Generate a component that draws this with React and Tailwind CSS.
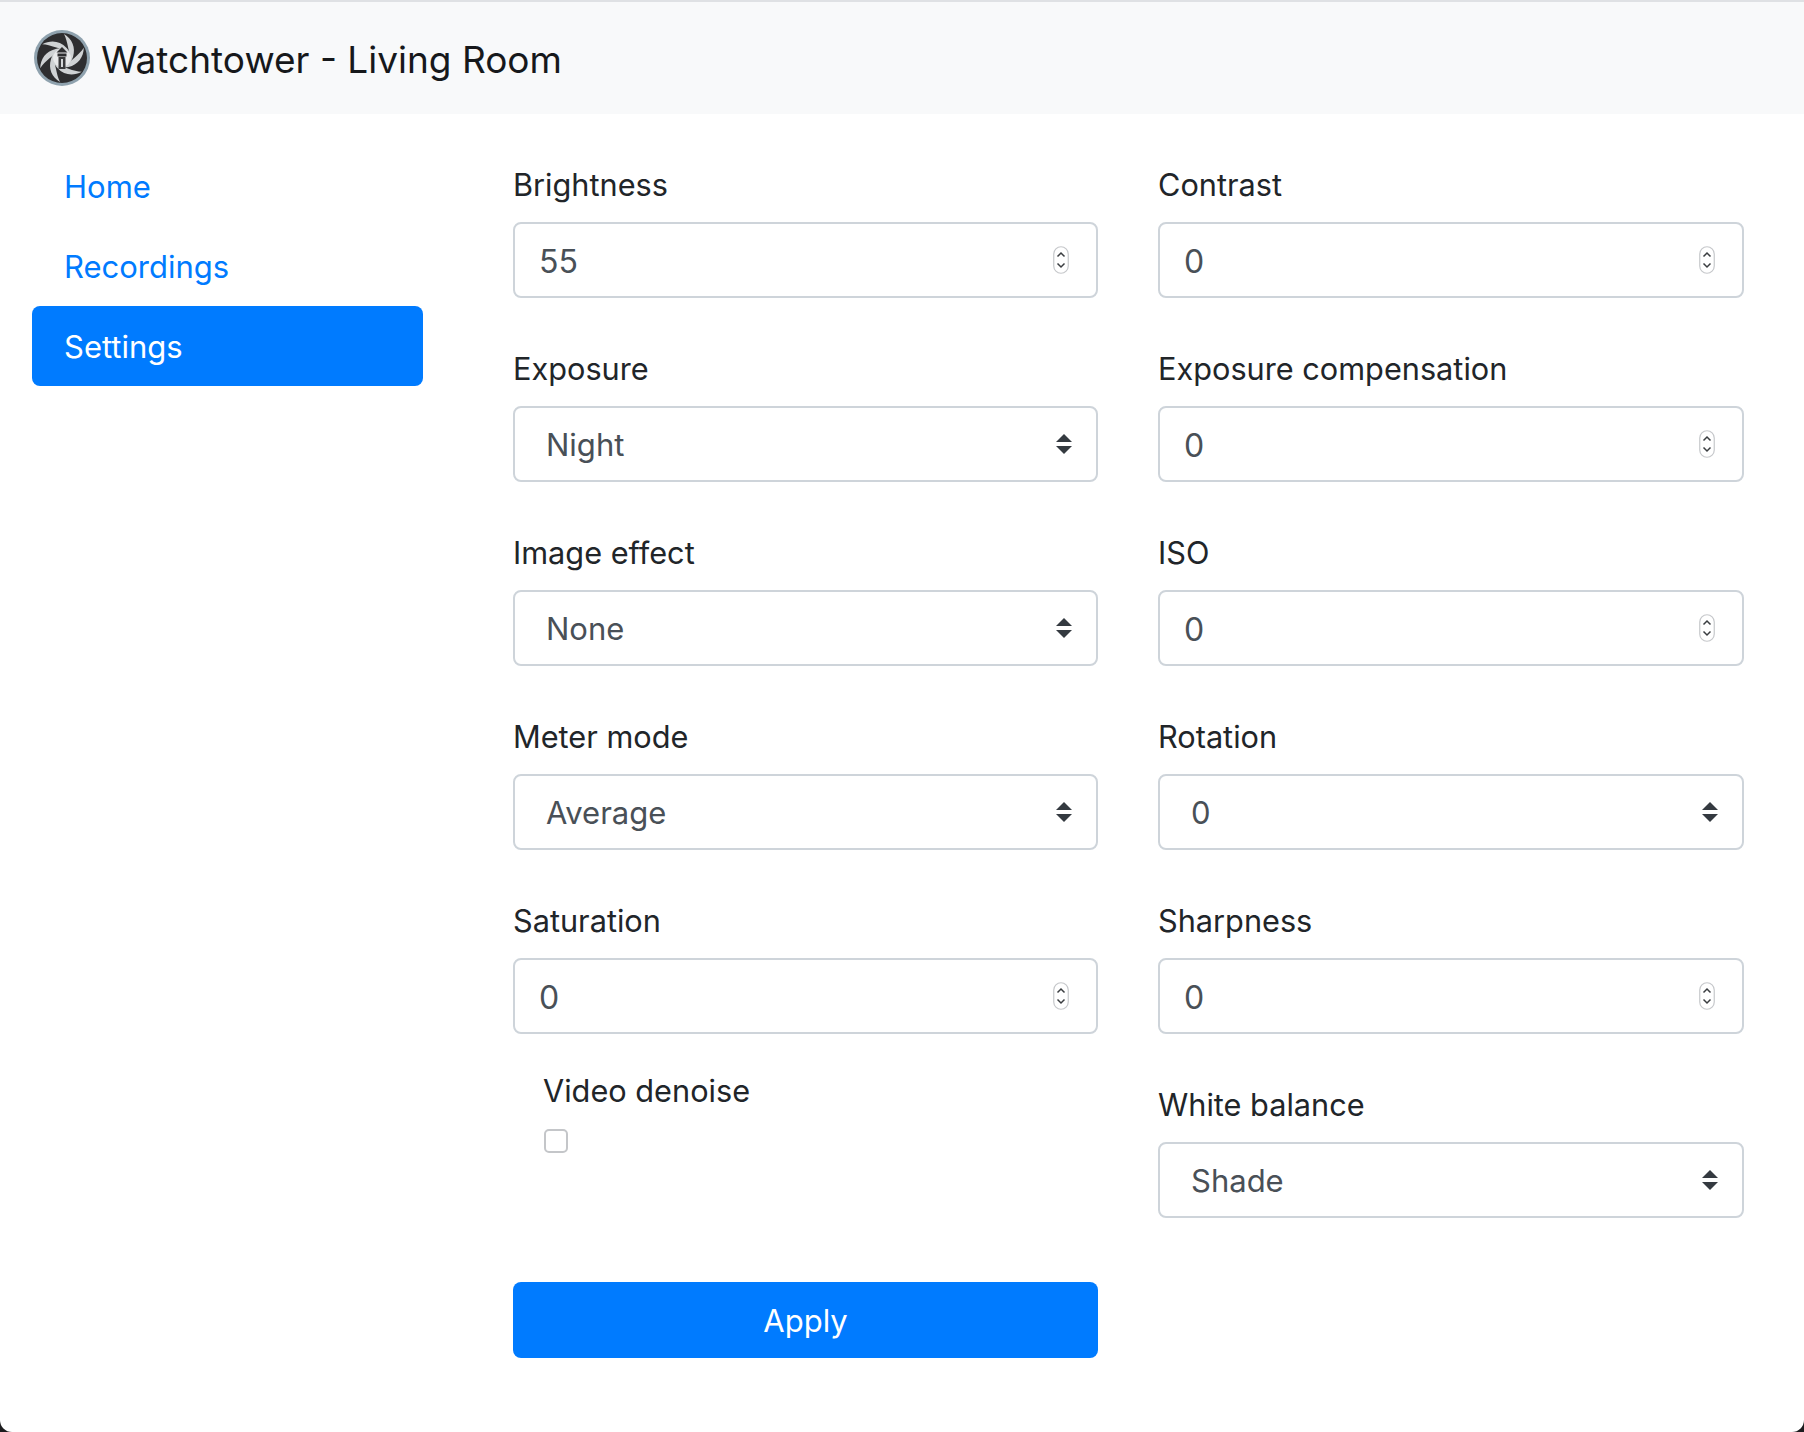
const font = { fontFamily: "Inter, 'Liberation Sans', sans-serif" };

function Logo() {
  const blades = [0, 60, 120, 180, 240, 300];
  return (
    <svg width="58" height="58" viewBox="0 0 58 58" className="shrink-0">
      <circle cx="29" cy="29" r="28" fill="#8fa2ae" />
      <circle cx="29" cy="29" r="25" fill="#2e2e30" />
      {blades.map((a) => (
        <path
          key={a}
          d="M31 5 C39 10 43 18 40 28 C38 34 34 37 30 38 C35 32 37 25 35 18 C34 13 33 9 31 5 Z"
          fill="#cfd2d4"
          transform={`rotate(${a} 29 29)`}
        />
      ))}
      <circle cx="29" cy="29" r="9" fill="#e8e9ea" />
      <path d="M23.5 23.5 L29 18 L34.5 23.5 Z" fill="#2e2e30" />
      <rect x="24.5" y="24.5" width="9" height="3" fill="#2e2e30" />
      <rect x="25.5" y="28" width="7" height="12" fill="#3a3a3c" />
      <rect x="28" y="30" width="2" height="8" fill="#d5d7d9" />
    </svg>
  );
}

function Spinner() {
  return (
    <svg width="16" height="28" viewBox="0 0 16 28" className="shrink-0">
      <rect x="0.75" y="0.75" width="14.5" height="26.5" rx="7.25" fill="#fff" stroke="#c6c8cb" strokeWidth="1.2" />
      <path d="M4.5 10.5 L8 7 L11.5 10.5" fill="none" stroke="#3a3d40" strokeWidth="1.5" />
      <path d="M4.5 17.5 L8 21 L11.5 17.5" fill="none" stroke="#3a3d40" strokeWidth="1.5" />
    </svg>
  );
}

function Arrows() {
  return (
    <svg width="16" height="20" viewBox="0 0 16 20" className="shrink-0">
      <path d="M8 0 L16 8 L0 8 Z" fill="#343a40" />
      <path d="M8 20 L16 12 L0 12 Z" fill="#343a40" />
    </svg>
  );
}

function Label({ children }) {
  return <div className="h-[48px] text-[30.7px] leading-[48px] text-[#212529]">{children}</div>;
}

function NumberField({ label, value }) {
  return (
    <div className="mb-[47px]">
      <Label>{label}</Label>
      <div className="mt-[13px] h-[76px] border-2 border-[#ced4da] rounded-[8px] pl-[24px] pr-[27px] flex items-center justify-between text-[32px] text-[#495057] bg-white">
        <span className="pt-[3px]">{value}</span>
        <Spinner />
      </div>
    </div>
  );
}

function SelectField({ label, value }) {
  return (
    <div className="mb-[47px]">
      <Label>{label}</Label>
      <div className="mt-[13px] h-[76px] border-2 border-[#ced4da] rounded-[8px] pl-[31px] pr-[24px] flex items-center justify-between text-[31px] text-[#495057] bg-white">
        <span className="pt-[2px]">{value}</span>
        <Arrows />
      </div>
    </div>
  );
}

function NavItem({ children, active }) {
  return (
    <div className={`h-[80px] pl-[32px] pt-[3px] flex items-center ${active ? "text-white bg-[#007bff] rounded-[8px]" : "text-[#007bff]"}`}>
      {children}
    </div>
  );
}

export default function App() {
  return (
    <div className="h-[1432px] bg-[#1c1c1e]" style={font}>
      <div className="h-full bg-white overflow-hidden rounded-b-[12px]">
        <div className="border-t-2 border-[#dfe1e4] h-[114px] bg-[#f8f9fa] pl-[33px] flex items-center gap-[10px]">
          <Logo />
          <span className="pt-[4px] text-[37px] text-[#16181b]">Watchtower - Living Room</span>
        </div>
        <div className="flex">
          <div className="w-[391px] ml-[32px] mr-[90px] pt-[32px] shrink-0 text-[31px]">
            <NavItem>Home</NavItem>
            <NavItem>Recordings</NavItem>
            <NavItem active>Settings</NavItem>
          </div>
          <div className="pt-[47px] grid grid-cols-[585px_586px] gap-x-[60px]">
            <div>
              <NumberField label="Brightness" value="55" />
              <SelectField label="Exposure" value="Night" />
              <SelectField label="Image effect" value="None" />
              <SelectField label="Meter mode" value="Average" />
              <NumberField label="Saturation" value="0" />
              <div className="h-[215px] -mt-[14px] pl-[30px]">
                <Label>Video denoise</Label>
                <div className="mt-[14px] ml-[1px] w-[24px] h-[24px] border-2 border-[#c4c6c9] rounded-[5px] bg-white" />
              </div>
              <div className="h-[76px] pt-[2px] bg-[#007bff] rounded-[8px] flex items-center justify-center text-white text-[31px]">
                Apply
              </div>
            </div>
            <div>
              <NumberField label="Contrast" value="0" />
              <NumberField label="Exposure compensation" value="0" />
              <NumberField label="ISO" value="0" />
              <SelectField label="Rotation" value="0" />
              <NumberField label="Sharpness" value="0" />
              <SelectField label="White balance" value="Shade" />
            </div>
          </div>
        </div>
      </div>
    </div>
  );
}
